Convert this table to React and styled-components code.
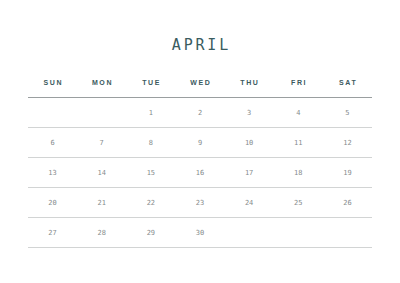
import React from "react";
import styled, { createGlobalStyle } from "styled-components";

const Global = createGlobalStyle`
  html, body { margin: 0; padding: 0; background: #ffffff; }
  body { width: 400px; height: 283px; overflow: hidden; }
`;

const Page = styled.div`
  width: 400px;
  height: 283px;
  display: flex;
  flex-direction: column;
  align-items: center;
  padding-top: 35px;
  box-sizing: border-box;
`;

const Title = styled.h1`
  margin: 0;
  font-family: "DejaVu Sans Mono", "Liberation Mono", monospace;
  font-weight: 400;
  font-size: 15px;
  line-height: 20px;
  letter-spacing: 2.8px;
  padding-left: 2.8px;
  color: #3a5c60;
`;

const Table = styled.div`
  width: 344px;
  margin-top: 12px;
  display: grid;
  grid-template-columns: repeat(7, 1fr);
`;

const Head = styled.div`
  height: 31px;
  display: flex;
  align-items: center;
  justify-content: center;
  box-sizing: border-box;
  border-bottom: 1px solid #9a9fa0;
  font-family: "Liberation Sans", Arial, sans-serif;
  font-weight: 700;
  font-size: 7px;
  letter-spacing: 1.6px;
  padding-left: 1.6px;
  color: #3b5a5e;
`;

const Cell = styled.div`
  height: 30px;
  display: flex;
  align-items: center;
  justify-content: center;
  box-sizing: border-box;
  border-bottom: 1px solid #d2d4d4;
  font-family: "DejaVu Sans Mono", "Liberation Mono", monospace;
  font-size: 7px;
  color: #868c8d;
`;

const days = ["SUN", "MON", "TUE", "WED", "THU", "FRI", "SAT"];
const cells = [null, null, ...Array.from({ length: 30 }, (_, i) => i + 1)];
while (cells.length % 7) cells.push(null);

export default function App() {
  return (
    <>
      <Global />
      <Page>
        <Title>APRIL</Title>
        <Table>
          {days.map((d) => (
            <Head key={d}>{d}</Head>
          ))}
          {cells.map((n, i) => (
            <Cell key={i}>{n ?? ""}</Cell>
          ))}
        </Table>
      </Page>
    </>
  );
}
